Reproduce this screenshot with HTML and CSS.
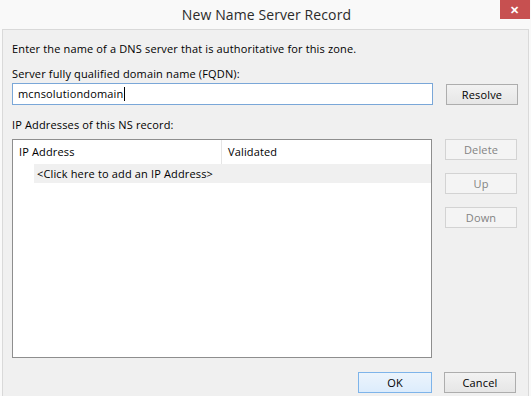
FILE: index.html
```html
<!DOCTYPE html>
<html lang="en">
<head>
    <meta charset="UTF-8">
    <title>New Name Server Record</title>
    <link rel="stylesheet" href="styles.css">
</head>
<body>
    <div class="window">
        <div class="titlebar">
            <span class="title">New Name Server Record</span>
            <span class="close">&#x2715;</span>
        </div>
        <div class="client">
            <p class="intro">Enter the name of a DNS server that is authoritative for this zone.</p>
            <p class="label">Server fully qualified domain name (FQDN):</p>
            <div class="row">
                <div class="input">mcnsolutiondomain<span class="caret"></span></div>
                <button class="btn">Resolve</button>
            </div>
            <p class="label label-ip">IP Addresses of this NS record:</p>
            <div class="row row-list">
                <div class="list">
                    <div class="list-head">
                        <span class="col col-ip">IP Address</span>
                        <span class="col col-val">Validated</span>
                    </div>
                    <div class="list-row">&lt;Click here to add an IP Address&gt;</div>
                </div>
                <div class="side">
                    <button class="btn" disabled>Delete</button>
                    <button class="btn" disabled>Up</button>
                    <button class="btn" disabled>Down</button>
                </div>
            </div>
            <div class="footer">
                <button class="btn btn-default">OK</button>
                <button class="btn">Cancel</button>
            </div>
        </div>
    </div>
</body>
</html>
```

FILE: styles.css
```css
body {
    margin: 0;
    background-color: #f9f9f9;
    font-family: "Open Sans", "Noto Sans", sans-serif;
    font-size: 11px;
    letter-spacing: 0.15px;
    color: #000;
}

.window {
    width: 531px;
    height: 396px;
    display: flex;
    flex-direction: column;
    overflow: hidden;
}

.titlebar {
    height: 29px;
    display: flex;
    align-items: flex-start;
    justify-content: center;
    position: relative;
}

.title {
    font-size: 14px;
    letter-spacing: 0.1px;
    color: #2b2b2b;
    margin-top: 5px;
    margin-left: 2px;
}

.close {
    position: absolute;
    right: 1px;
    top: 0;
    width: 30px;
    height: 19px;
    background-color: #c75050;
    color: #fff;
    font-size: 11px;
    font-weight: bold;
    text-align: center;
    line-height: 19px;
}

.client {
    flex: 1;
    margin: 0 2px 0 2px;
    border: 1px solid #d9d9d9;
    border-bottom: none;
    background-color: #f0f0f0;
    padding: 0 10px 0 9px;
}

p {
    margin: 0;
}

.intro {
    margin-top: 11px;
    line-height: 16px;
}

.label {
    margin-top: 9px;
    line-height: 16px;
}

.label-ip {
    margin-top: 12px;
}

.row {
    display: flex;
    gap: 13px;
    margin-top: 1px;
}

.input {
    width: 414px;
    height: 20px;
    border: 1px solid #7aa7d8;
    background-color: #fff;
    line-height: 20px;
    padding-left: 5px;
    display: flex;
    align-items: center;
}

.caret {
    display: inline-block;
    width: 1px;
    height: 14px;
    background-color: #000;
    margin-left: 1px;
}

.btn {
    width: 72px;
    height: 21px;
    margin-top: 1px;
    padding: 0;
    font-family: inherit;
    font-size: 11px;
    letter-spacing: 0.15px;
    color: #000;
    border: 1px solid #adadad;
    border-radius: 0;
    background: linear-gradient(#f2f2f2, #e6e6e6);
}

.btn:disabled {
    color: #838383;
    border-color: #d3d3d3;
    background: #f4f4f4;
}

.btn-default {
    width: 74px;
    border-color: #7eb4ea;
    background: linear-gradient(#ecf4fc, #dcecfc);
}

.row-list {
    margin-top: 6px;
}

.list {
    width: 418px;
    height: 217px;
    border: 1px solid #8e8e8e;
    background-color: #fff;
}

.list-head {
    display: flex;
    height: 24px;
    align-items: center;
}

.col {
    padding-left: 6px;
}

.col-ip {
    width: 202px;
    border-right: 1px solid #e5e5e5;
    height: 24px;
    line-height: 24px;
}

.col-val {
    line-height: 24px;
}

.list-row {
    margin-left: 21px;
    height: 19px;
    line-height: 19px;
    padding-left: 3px;
    background-color: #f0f0f0;
}

.side {
    display: flex;
    flex-direction: column;
    gap: 13px;
}

.side .btn {
    height: 21px;
    margin-top: 0;
}

.footer {
    display: flex;
    gap: 12px;
    margin-top: 14px;
    padding-left: 346px;
}

.footer .btn {
    height: 21px;
    margin-top: 0;
}
```
